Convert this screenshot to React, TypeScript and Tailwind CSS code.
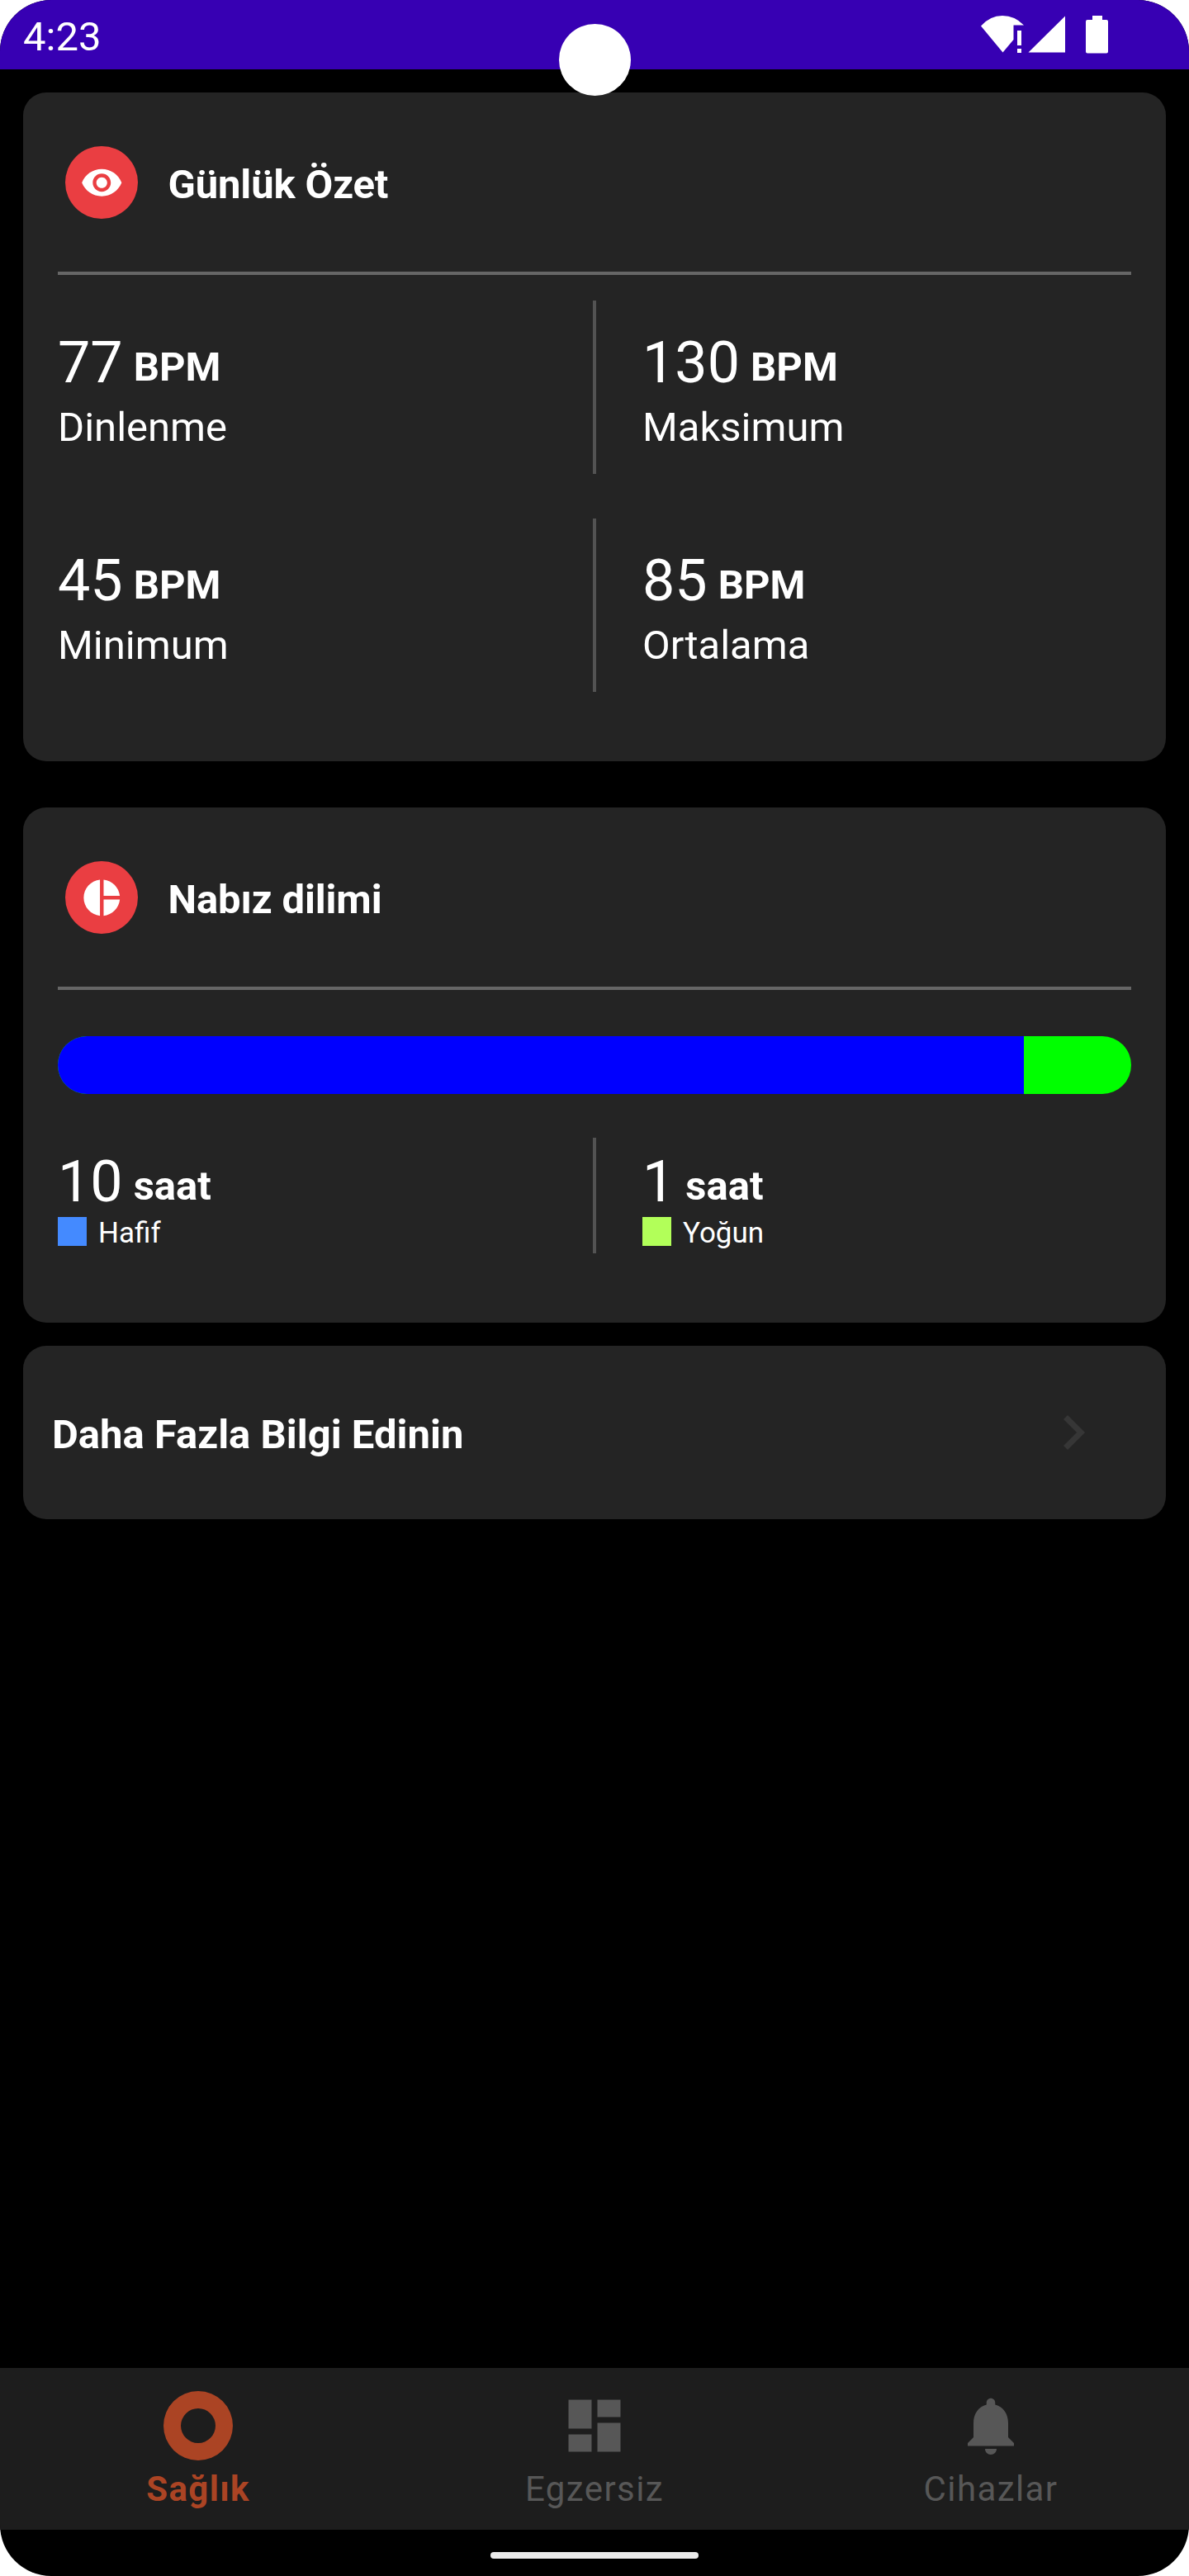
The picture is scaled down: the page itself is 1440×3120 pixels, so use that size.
import React from "react";

const EYE =
  "M12 4.5C7 4.5 2.73 7.61 1 12c1.73 4.39 6 7.5 11 7.5s9.27-3.11 11-7.5c-1.73-4.39-6-7.5-11-7.5zM12 17c-2.76 0-5-2.24-5-5s2.24-5 5-5 5 2.24 5 5-2.24 5-5 5zm0-8c-1.66 0-3 1.34-3 3s1.34 3 3 3 3-1.34 3-3-1.34-3-3-3z";
const PIE =
  "M11 2v20c-5.07-.5-9-4.79-9-10s3.93-9.5 9-10zm2.03 0v8.99H22c-.47-4.74-4.24-8.52-8.97-8.99zm0 11.01V22c4.74-.47 8.5-4.25 8.97-8.99h-8.97z";
const RING = "M12 0a12 12 0 1 0 0 24a12 12 0 0 0 0-24zm0 6a6 6 0 1 1 0 12a6 6 0 0 1 0-12z";
const DASHBOARD = "M3 13h8V3H3v10zm0 8h8v-6H3v6zm10 0h8V11h-8v10zm0-18v6h8V3h-8z";
const BELL =
  "M12 22c1.1 0 2-.9 2-2h-4c0 1.1.89 2 2 2zm6-6v-5c0-3.07-1.64-5.64-4.5-6.32V4c0-.83-.67-1.5-1.5-1.5s-1.5.67-1.5 1.5v.68C7.63 5.36 6 7.92 6 11v5l-2 2v1h16v-1l-2-2z";

function StatusBar() {
  return (
    <header className="relative flex h-[84px] items-start justify-between bg-[#3700b3]">
      <span className="pl-[28px] pt-[16px] text-[49px] leading-[57px]">4:23</span>
      <svg className="mr-[80px] h-[84px] w-[180px]" viewBox="1180 0 180 84" fill="currentColor">
        <path d="M1188 31.500Q1199 19 1214 19Q1229 19 1240 30.500H1227.500V48L1214.500 63.500Z" />
        <path d="M1232 37h5v18h-5zM1232 59h5v5h-5z" />
        <path d="M1290 19.500V63.500H1245.500Z" />
        <path d="M1323 19h12v5h5a2 2 0 0 1 2 2v36.500a2 2 0 0 1-2 2h-23a2 2 0 0 1-2-2v-36.500a2 2 0 0 1 2-2h6z" />
      </svg>
      <div className="absolute left-[677px] top-[29px] z-10 size-[86.5px] rounded-full bg-white" />
    </header>
  );
}

function CardHeader({ icon, title }: { icon: string; title: string }) {
  return (
    <div className="flex h-[221px] items-start border-b-4 border-[#666666]">
      <div className="ml-[9px] mt-[65px] flex size-[87.5px] items-center justify-center rounded-full bg-[#ea3e42]">
        <svg className="size-[52.5px]" viewBox="0 0 24 24" fill="currentColor">
          <path d={icon} />
        </svg>
      </div>
      <h2 className="ml-[37px] mt-[83px] text-[49px] font-bold leading-[57px] tracking-[-0.15px]">{title}</h2>
    </div>
  );
}

function Value({ value, unit }: { value: string; unit: string }) {
  return (
    <div className="flex items-start">
      <span className="text-[70px] leading-[82px]">{value}</span>
      <span className="ml-[13px] mt-[18px] text-[49px] font-bold leading-[57px]">{unit}</span>
    </div>
  );
}

function Metric({ value, label }: { value: string; label: string }) {
  return (
    <div className="flex-1 pt-[34px]">
      <Value value={value} unit="BPM" />
      <p className="mt-[9px] text-[49px] leading-[57px]">{label}</p>
    </div>
  );
}

function MetricRow({ left, right }: { left: [string, string]; right: [string, string] }) {
  return (
    <div className="flex h-[210px]">
      <Metric value={left[0]} label={left[1]} />
      <div className="mr-[56px] w-1 bg-[#535353]" />
      <div className="flex w-[592px]">
        <Metric value={right[0]} label={right[1]} />
      </div>
    </div>
  );
}

function Zone({ value, label, swatch }: { value: string; label: string; swatch: string }) {
  return (
    <div className="flex-1 pt-[12px]">
      <Value value={value} unit="saat" />
      <div className="mt-[2px] flex items-start gap-[14px]">
        <span className={`size-[35px] ${swatch}`} />
        <span className="-mt-px text-[35px] leading-[41px]">{label}</span>
      </div>
    </div>
  );
}

function NavItem({ icon, label, active = false }: { icon: string; label: string; active?: boolean }) {
  return (
    <div
      className={`flex flex-1 flex-col items-center pt-[28px] ${
        active ? "font-bold text-[#ab4424]" : "text-[#575757]"
      }`}
    >
      <svg className="size-[84px]" viewBox="0 0 24 24" fill="currentColor">
        <path d={icon} />
      </svg>
      <span className="mt-[10px] text-[42px] leading-[49px] tracking-[1.4px]">{label}</span>
    </div>
  );
}

export default function App() {
  return (
    <div className="bg-white">
      <div className="flex h-[3120px] w-[1440px] flex-col overflow-hidden rounded-[62px] bg-black font-['Roboto',sans-serif] text-white">
        <StatusBar />
        <main className="flex flex-1 flex-col px-[28px] pt-[28px]">
          <section className="h-[810px] rounded-[28px] bg-[#242424] px-[42px]">
            <CardHeader icon={EYE} title="Günlük Özet" />
            <div className="mt-[31px] flex flex-col gap-[54px]">
              <MetricRow left={["77", "Dinlenme"]} right={["130", "Maksimum"]} />
              <MetricRow left={["45", "Minimum"]} right={["85", "Ortalama"]} />
            </div>
          </section>

          <section className="mt-[56px] h-[624px] rounded-[28px] bg-[#242424] px-[42px]">
            <CardHeader icon={PIE} title="Nabız dilimi" />
            <div className="mt-[56px] flex h-[70px] overflow-hidden rounded-full bg-[#00ff00]">
              <div className="w-[1170px] bg-[#0000ff]" />
            </div>
            <div className="mt-[53px] flex h-[140px]">
              <Zone value="10" label="Hafif" swatch="bg-[#448aff]" />
              <div className="mr-[56px] w-1 bg-[#535353]" />
              <div className="flex w-[592px]">
                <Zone value="1" label="Yoğun" swatch="bg-[#b2ff59]" />
              </div>
            </div>
          </section>

          <section className="mt-[28px] flex h-[210px] items-center justify-between rounded-[28px] bg-[#242424] pl-[35px] pr-[70px]">
            <h2 className="mt-[5px] text-[49px] font-bold leading-[57px]">Daha Fazla Bilgi Edinin</h2>
            <svg className="size-[84px]" viewBox="0 0 24 24" fill="#363636">
              <path d="M10 6L8.590 7.410 13.170 12l-4.580 4.590L10 18l6-6z" />
            </svg>
          </section>
        </main>
        <nav className="flex h-[196px] bg-[#1d1d1d]">
          <NavItem icon={RING} label="Sağlık" active />
          <NavItem icon={DASHBOARD} label="Egzersiz" />
          <NavItem icon={BELL} label="Cihazlar" />
        </nav>
        <footer className="flex h-[56px] justify-center pt-[27px]">
          <div className="h-[8px] w-[252px] rounded-full bg-[#ebebeb]" />
        </footer>
      </div>
    </div>
  );
}
